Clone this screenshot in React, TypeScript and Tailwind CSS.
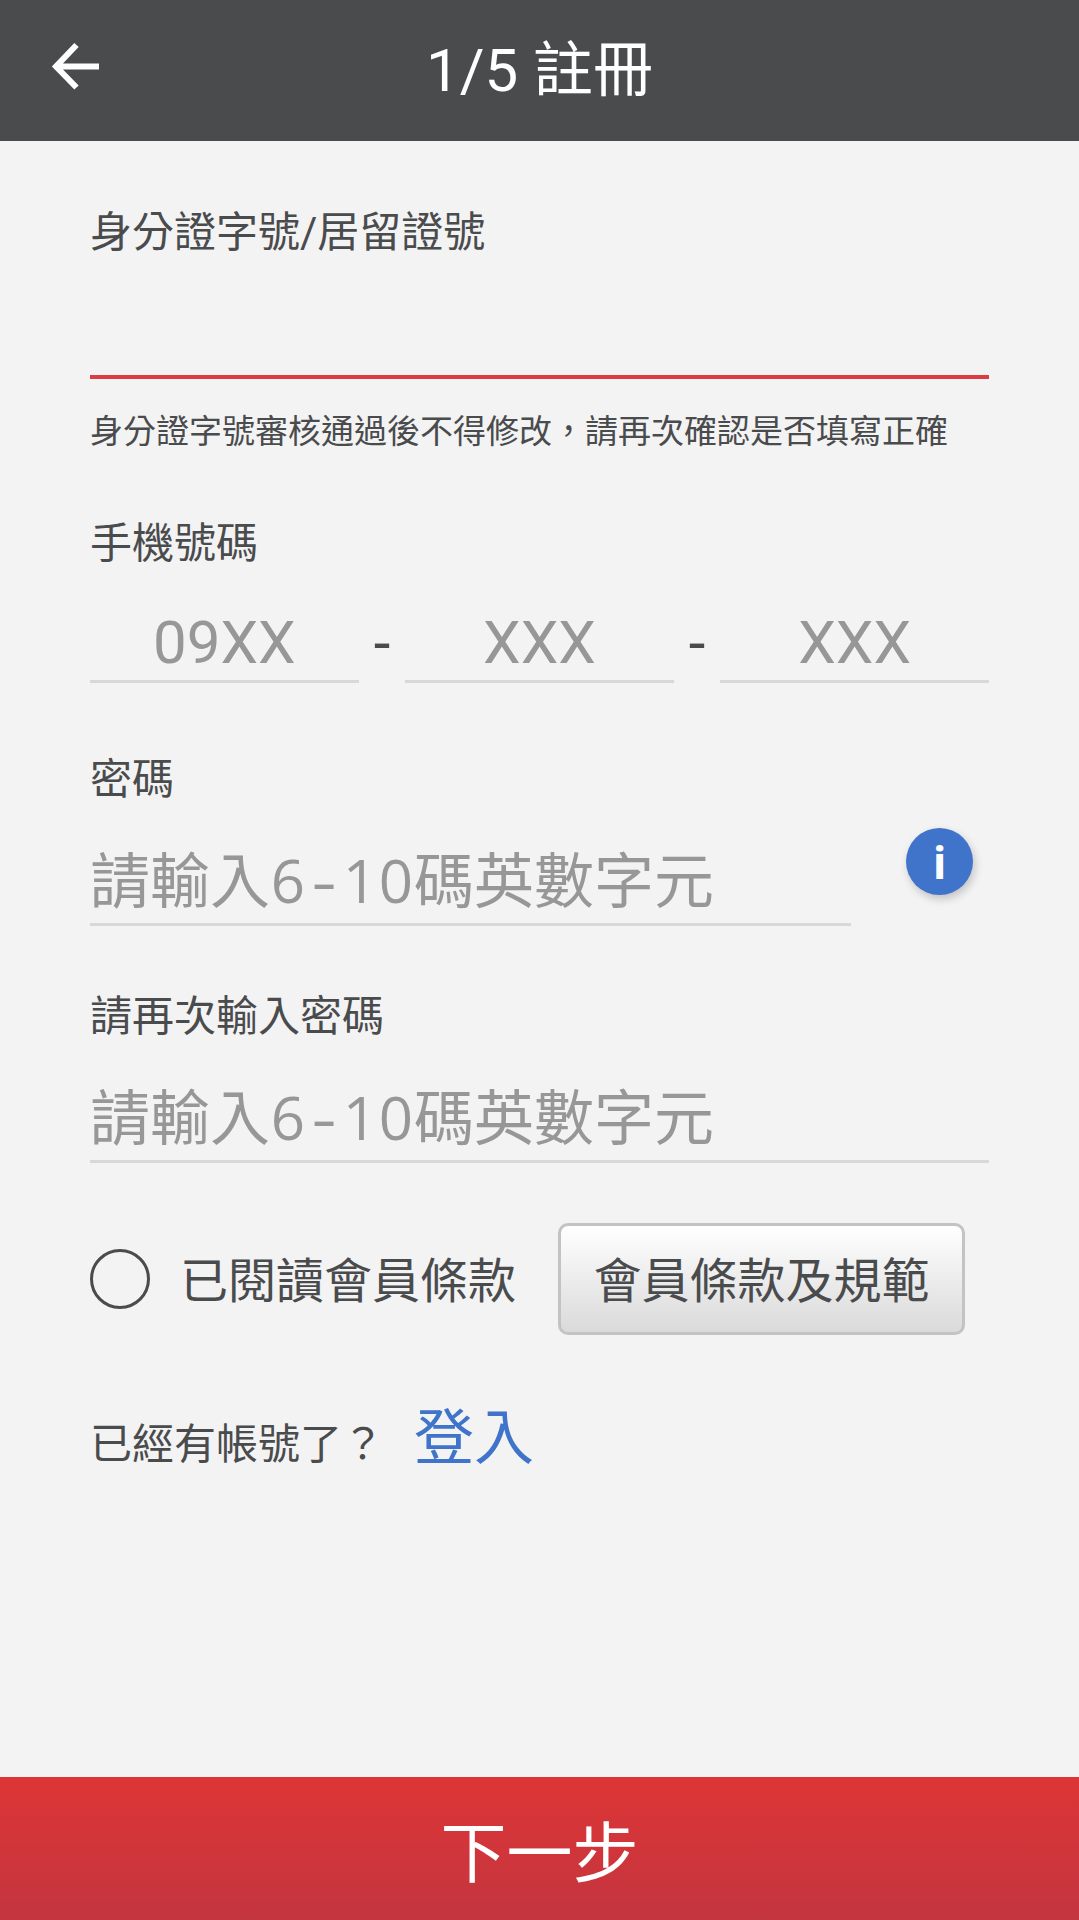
import React from 'react';

const PhonePart = ({ hint }: { hint: string }) => (
    <div className="flex-1 h-[90px] border-b-3 border-[#d8d8d8] text-center text-[60px] leading-[99px] text-[#979797]">
        {hint}
    </div>
);

const Separator = () => (
    <span className="w-[46.5px] text-center text-[60px] leading-[102px]">-</span>
);

const PasswordHint = () => (
    <div className="flex text-[60px] leading-[93px] text-[#979797] whitespace-nowrap">
        <span>請輸入</span>
        {/* fixed-width digits */}
        <span className="flex leading-[88px] font-['Open_Sans','Noto_Sans_CJK_TC',sans-serif]">
            <span className="w-9 text-center">6</span>
            <span className="w-9 text-center scale-x-[1.3]">-</span>
            <span className="w-9 text-center">1</span>
            <span className="w-9 text-center">0</span>
        </span>
        <span>碼英數字元</span>
    </div>
);

export default function App() {
    return (
        <div className="w-full h-[1920px] flex flex-col bg-[#f3f3f3] text-[#4a4b4d] font-['Roboto','Noto_Sans_CJK_TC',sans-serif] overflow-hidden">

            <header className="h-[141px] shrink-0 bg-[#4a4b4d] flex items-center text-white">
                <svg className="w-[48px] h-[48px] ml-[51px] mb-[9px]" viewBox="0 0 48 48" fill="none" stroke="currentColor" strokeWidth="6">
                    <path d="M25.5 3L5 24.5L25.5 45.5M5 24.5H48" />
                </svg>
                <h1 className="flex-1 text-center text-[60px] leading-[72px] mr-[99px]">1/5 註冊</h1>
            </header>

            <main className="flex-1 px-[90px] flex flex-col">
                <div className="mt-[62px] h-[60px] text-[42px] leading-[60px]">身分證字號/居留證號</div>
                <div className="h-[116px] border-b-4 border-[#dc3d42]" />
                <p className="mt-[29px] h-[48px] text-[33px] leading-[48px] whitespace-nowrap">
                    身分證字號審核通過後不得修改，請再次確認是否填寫正確
                </p>

                <div className="mt-[58px] h-[60px] text-[42px] leading-[60px]">手機號碼</div>
                <div className="mt-[19px] h-[90px] flex">
                    <PhonePart hint="09XX" />
                    <Separator />
                    <PhonePart hint="XXX" />
                    <Separator />
                    <PhonePart hint="XXX" />
                </div>

                <div className="mt-[67px] h-[60px] text-[42px] leading-[60px]">密碼</div>
                <div className="mt-[26px] h-[90px] flex justify-between">
                    <div className="w-[761px] border-b-3 border-[#d8d8d8]">
                        <PasswordHint />
                    </div>
                    <button className="w-[67px] h-[67px] mr-[16px] -mt-[8px] rounded-full bg-[#4074cb] shadow-[2px_4px_8px_rgba(0,0,0,0.2)] text-white font-bold text-[45px] leading-[65px] font-['Open_Sans',sans-serif]">
                        i
                    </button>
                </div>

                <div className="mt-[61px] h-[60px] text-[42px] leading-[60px]">請再次輸入密碼</div>
                <div className="mt-[26px] h-[90px] border-b-3 border-[#d8d8d8]">
                    <PasswordHint />
                </div>

                <div className="mt-[60px] h-[112px] flex items-center text-[48px]">
                    <span className="w-[60px] h-[60px] rounded-full border-3 border-[#4a4b4d]" />
                    <span className="ml-[30px] pt-[5px] w-[378px] leading-[72px] whitespace-nowrap">已閱讀會員條款</span>
                    <button className="w-[407px] h-[112px] pt-[5px] rounded-[10px] border-3 border-[#c3c3c3] bg-linear-to-b from-white to-[#dadada] leading-[72px] whitespace-nowrap">
                        會員條款及規範
                    </button>
                </div>

                <div className="mt-[60px] flex">
                    <span className="mt-[20px] w-[324px] text-[42px] leading-[60px] whitespace-nowrap">已經有帳號了？</span>
                    <a className="text-[60px] leading-[88px] text-[#4074cb]">登入</a>
                </div>
            </main>

            <button className="h-[143px] shrink-0 bg-linear-to-b from-[#de3535] to-[#c3353f] text-white text-[66px] leading-[96px] pt-3">
                下一步
            </button>
        </div>
    );
}
